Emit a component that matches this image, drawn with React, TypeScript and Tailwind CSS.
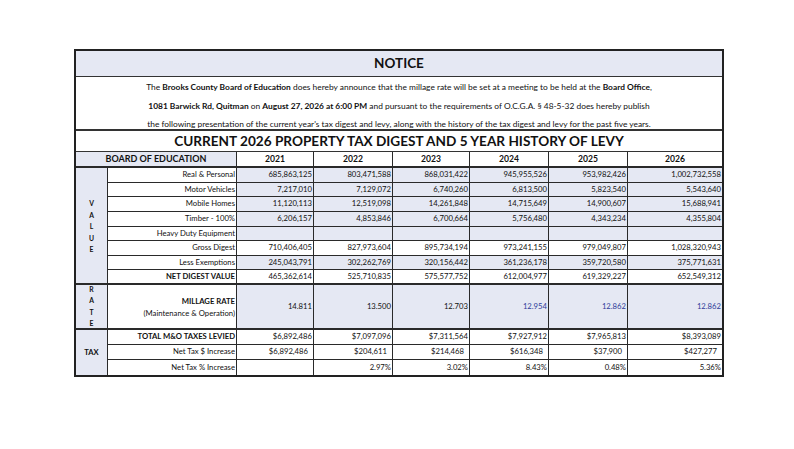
import React from 'react';

type Row = {
  label: string;
  values: string[];
  shaded: boolean;
  bold?: boolean;
  pad?: boolean;
};

const years = ['2021', '2022', '2023', '2024', '2025', '2026'];

const valueRows: Row[] = [
  { label: 'Real & Personal', values: ['685,863,125', '803,471,588', '868,031,422', '945,955,526', '953,982,426', '1,002,732,558'], shaded: true },
  { label: 'Motor Vehicles', values: ['7,217,010', '7,129,072', '6,740,260', '6,813,500', '5,823,540', '5,543,640'], shaded: true },
  { label: 'Mobile Homes', values: ['11,120,113', '12,519,098', '14,261,848', '14,715,649', '14,900,607', '15,688,941'], shaded: true },
  { label: 'Timber - 100%', values: ['6,206,157', '4,853,846', '6,700,664', '5,756,480', '4,343,234', '4,355,804'], shaded: true },
  { label: 'Heavy Duty Equipment', values: ['', '', '', '', '', ''], shaded: true },
  { label: 'Gross Digest', values: ['710,406,405', '827,973,604', '895,734,194', '973,241,155', '979,049,807', '1,028,320,943'], shaded: false },
  { label: 'Less Exemptions', values: ['245,043,791', '302,262,769', '320,156,442', '361,236,178', '359,720,580', '375,771,631'], shaded: true },
  { label: 'NET DIGEST VALUE', values: ['465,362,614', '525,710,835', '575,577,752', '612,004,977', '619,329,227', '652,549,312'], shaded: false, bold: true },
];

const taxRows: Row[] = [
  { label: 'TOTAL M&O TAXES LEVIED', values: ['$6,892,486', '$7,097,096', '$7,311,564', '$7,927,912', '$7,965,813', '$8,393,089'], shaded: false, bold: true },
  { label: 'Net Tax $ Increase', values: ['$6,892,486', '$204,611', '$214,468', '$616,348', '$37,900', '$427,277'], shaded: false, pad: true },
  { label: 'Net Tax % Increase', values: ['', '2.97%', '3.02%', '8.43%', '0.48%', '5.36%'], shaded: false },
];

const millage = ['14.811', '13.500', '12.703', '12.954', '12.862', '12.862'];

const shade = 'bg-[#e5e8f3]';

function DataRow({ row, last, thick }: { row: Row; last?: boolean; thick?: boolean }) {
  const bb = last ? '' : thick ? 'border-b-2' : 'border-b';
  return (
    <>
      <div className={`flex items-center justify-end pr-px border-r border-[#2a2a2a] bg-white ${bb} ${row.bold ? 'font-bold' : ''}`}>
        {row.label}
      </div>
      {row.values.map((v, i) => (
        <div
          key={i}
          className={`flex items-center justify-end border-[#2a2a2a] ${i < 5 ? 'border-r' : ''} ${bb} ${row.shaded ? shade : 'bg-white'} ${row.pad ? 'pr-[5px]' : 'pr-px'}`}
        >
          {v}
        </div>
      ))}
    </>
  );
}

function Letters({ text }: { text: string }) {
  return (
    <div className="flex flex-col items-center leading-[11.5px]">
      {text.split('').map((c, i) => (
        <span key={i}>{c}</span>
      ))}
    </div>
  );
}

export default function App() {
  return (
    <div className="w-[794px] h-[449px] bg-white pt-[49px] pl-[74px] font-['Lato',_sans-serif] text-[#111]">
      <div className="w-[650px] border-2 border-[#222]">
        <div className={`h-[26px] flex items-center justify-center border-b border-[#333] ${shade} text-[13.5px] font-bold`}>
          NOTICE
        </div>
        <div className="h-[54px] border-b-2 border-[#333] text-[8.4px] text-center leading-[18.5px] pt-px">
          <div>
            The <b>Brooks County Board of Education</b> does hereby announce that the millage rate will be set at a meeting to be held at the <b>Board Office</b>,
          </div>
          <div>
            <b>1081 Barwick Rd, Quitman</b> on <b>August 27, 2026 at 6:00 PM</b> and pursuant to the requirements of O.C.G.A. § 48-5-32 does hereby publish
          </div>
          <div>
            the following presentation of the current year's tax digest and levy, along with the history of the tax digest and levy for the past five years.
          </div>
        </div>
        <div className="h-[21px] flex items-center justify-center border-b border-[#333] text-[13.6px] font-bold">
          CURRENT 2026 PROPERTY TAX DIGEST AND 5 YEAR HISTORY OF LEVY
        </div>

        <div className="grid grid-cols-[32px_129px_77px_79px_77px_79px_79px_94px] grid-rows-[16px_repeat(8,14.625px)_45px_repeat(3,15px)] text-[7.7px]">
          <div className={`col-span-2 flex items-center justify-center border-r border-b-2 border-[#2a2a2a] ${shade} text-[9px] font-bold`}>
            BOARD OF EDUCATION
          </div>
          {years.map((y, i) => (
            <div
              key={y}
              className={`flex items-center justify-center border-b-2 border-[#2a2a2a] bg-white text-[8.6px] font-bold ${i < 5 ? 'border-r' : ''}`}
            >
              {y}
            </div>
          ))}

          <div className={`row-span-8 flex items-center justify-center border-r border-b-2 border-[#2a2a2a] ${shade} text-[6.8px] font-bold pt-[3px]`}>
            <Letters text="VALUE" />
          </div>
          {valueRows.map((r, i) => (
            <DataRow key={r.label} row={r} thick={i === 7} />
          ))}

          <div className={`flex items-center justify-center border-r border-b-2 border-[#2a2a2a] ${shade} text-[6.8px] font-bold`}>
            <Letters text="RATE" />
          </div>
          <div className="flex flex-col items-end justify-center pr-px border-r border-b-2 border-[#2a2a2a] bg-white leading-[12px]">
            <span className="font-bold">MILLAGE RATE</span>
            <span>(Maintenance &amp; Operation)</span>
          </div>
          {millage.map((m, i) => (
            <div
              key={i}
              className={`flex items-center justify-end pr-px border-b-2 border-[#2a2a2a] ${shade} ${i < 5 ? 'border-r' : ''} ${i >= 3 ? 'text-[#2e3b99]' : ''}`}
            >
              {m}
            </div>
          ))}

          <div className={`row-span-3 flex items-center justify-center border-r border-[#2a2a2a] ${shade} text-[7.6px] font-bold`}>
            TAX
          </div>
          {taxRows.map((r, i) => (
            <DataRow key={r.label} row={r} last={i === 2} />
          ))}
        </div>
      </div>
    </div>
  );
}
